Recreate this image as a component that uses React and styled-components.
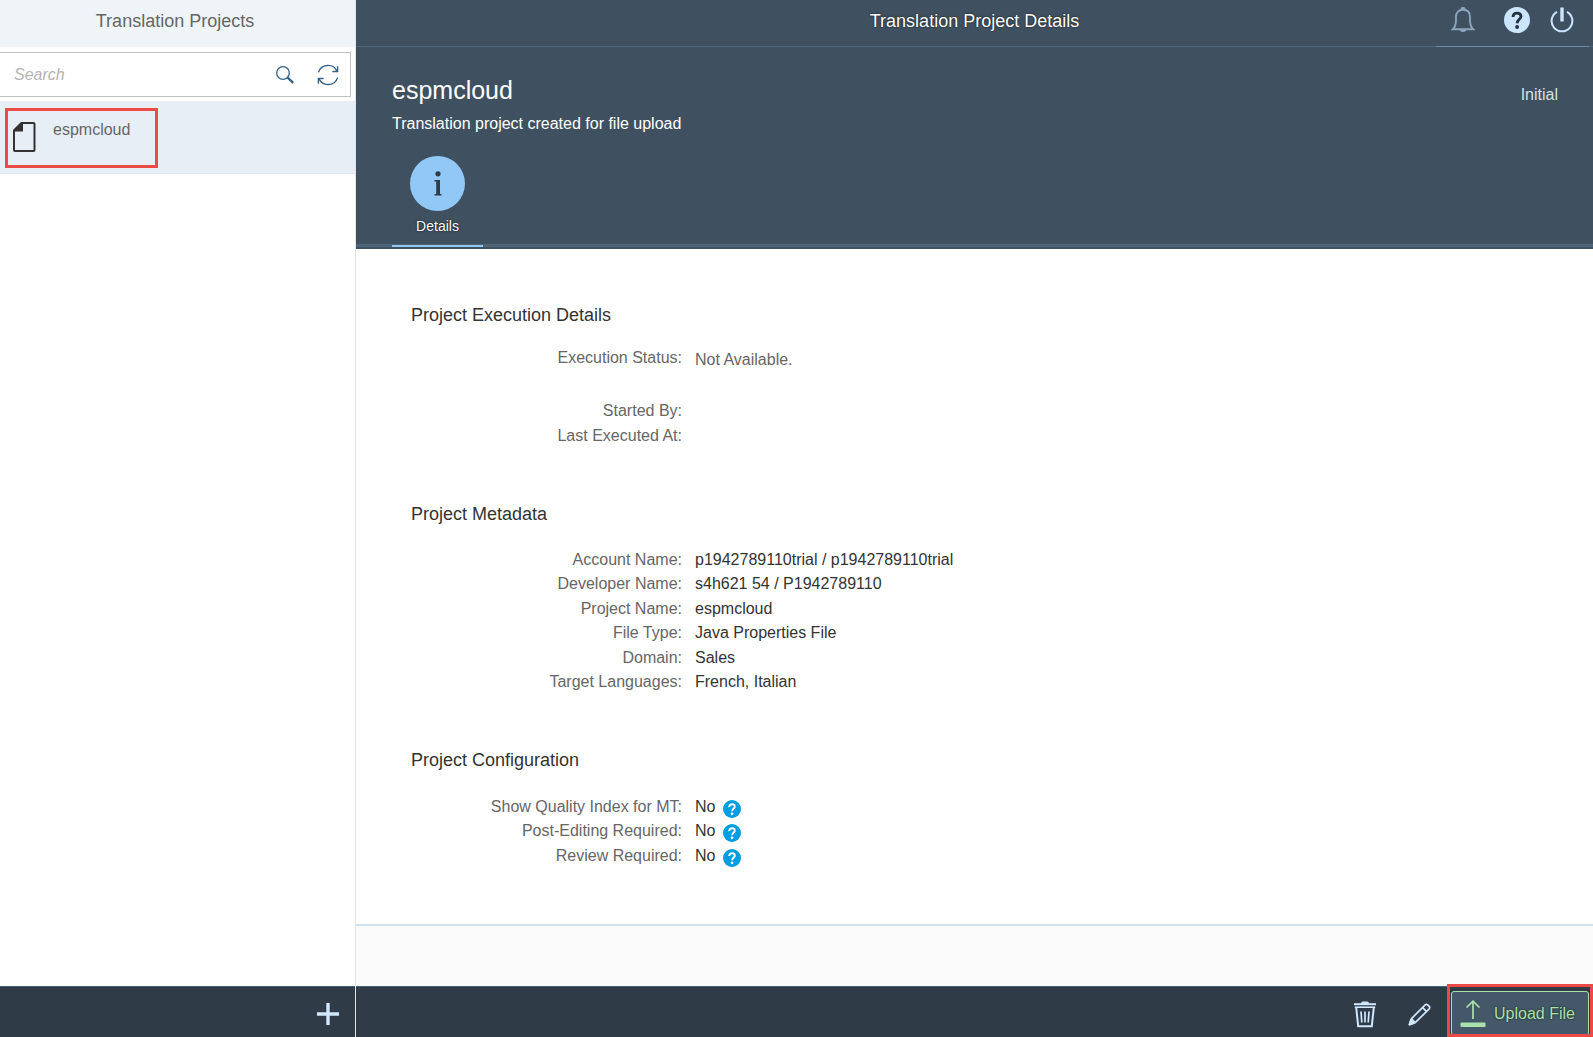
import React from "react";
import styled, { createGlobalStyle } from "styled-components";

const Global = createGlobalStyle`
  *, *::before, *::after { box-sizing: border-box; }
  body {
    margin: 0;
    font: 16px/24px "Liberation Sans", Arial, sans-serif;
    color: #333;
    background: #fff;
  }
  h1, h2, p, dl, dt, dd, ul { margin: 0; padding: 0; font-weight: 400; }
  button { font: inherit; color: inherit; background: none; border: 0; padding: 0; cursor: pointer; }
`;

const Page = styled.div`
  display: flex;
  min-height: 100vh;
`;

const Sidebar = styled.aside`
  display: flex;
  flex-direction: column;
  flex: none;
  width: 356px;
  border-right: 1px solid #e5e5e5;
`;

const Bar = styled.header`
  display: flex;
  height: 47px;
`;

const SidebarBar = styled(Bar)`
  align-items: center;
  justify-content: center;
  padding: 0 5px 6px 0;
  background: #eff4f8;
  color: #666;
`;

const BarTitle = styled.h1`
  font-size: 18px;
  line-height: 24px;
`;

const SearchBox = styled.form`
  display: flex;
  height: 45px;
  margin: 5px 4px 4px 0;
  padding-right: 1px;
  border: 1px solid #bfbfbf;
  border-left: 0;
  color: #346187;
`;

const SearchInput = styled.input`
  flex: 1;
  min-width: 0;
  padding: 0 0 0 14px;
  border: 0;
  outline: 0;
  background: transparent;
  font: inherit;
  color: #333;
  &::placeholder { color: #b3b3b3; font-style: italic; opacity: 1; }
`;

const IconButton = styled.button`
  display: flex;
  align-items: center;
  justify-content: center;
  flex: none;
  width: ${(p) => p.$width || 54}px;
`;

const ProjectList = styled.ul`
  flex: 1;
  list-style: none;
`;

const ProjectItem = styled.li`
  position: relative;
  display: flex;
  align-items: center;
  gap: 17px;
  height: 73px;
  padding-left: 13px;
  background: #e7eef6;
  border-bottom: 1px solid #e0e4e8;
`;

const ProjectLink = styled.a`
  align-self: flex-start;
  padding-top: 17px;
  color: #666;
  text-decoration: none;
`;

const Highlight = styled.span`
  position: absolute;
  inset: ${(p) => p.$inset};
  width: ${(p) => p.$width || "auto"};
  border: 3px solid #ec4a44;
  pointer-events: none;
`;

const Footer = styled.footer`
  display: flex;
  justify-content: flex-end;
  height: 51px;
  padding-top: 4px;
  border-top: 1px solid #456073;
  background: #2f3c48;
  color: #d1e8ff;
`;

const Main = styled.main`
  display: flex;
  flex-direction: column;
  flex: 1;
  min-width: 0;
`;

const DetailBar = styled(Bar)`
  display: grid;
  grid-template-columns: 1fr auto 1fr;
  border-bottom: 1px solid #4c6579;
  background: #3f5161;
  color: #fff;
  text-shadow: 0 0 2px #111;
`;

const DetailTitle = styled(BarTitle)`
  grid-column: 2;
  align-self: center;
  padding-bottom: 5px;
`;

const ShellActions = styled.nav`
  display: flex;
  justify-self: end;
  margin: 0 4px -1px 0;
  padding: 0 9px 6px 0;
  border-bottom: 1px solid #6d8ba4;
  color: #cbe5ff;
`;

const ObjectHeader = styled.section`
  padding-bottom: 2px;
  background: #3f5161;
  color: #fff;
`;

const ObjectSummary = styled.div`
  display: flex;
  justify-content: space-between;
  padding: 27px 35px 20px 36px;
`;

const ObjectTitle = styled.h2`
  margin-bottom: 6px;
  font-size: 25px;
  line-height: 32px;
`;

const ObjectStatus = styled.p`
  padding-top: 9px;
  color: #dcdfe2;
`;

const TabStrip = styled.div`
  display: flex;
  padding-left: 36px;
  border-bottom: 3px solid #4d6478;
`;

const Tab = styled.button`
  display: flex;
  flex-direction: column;
  align-items: center;
  gap: 5px;
  width: 91px;
  margin-bottom: -3px;
  padding-bottom: 9px;
  border-bottom: 2px solid #91c8f6;
  font-size: 14px;
  line-height: 20px;
  text-shadow: 0 0 2px #000;
`;

const TabCircle = styled.span`
  display: flex;
  align-items: center;
  justify-content: center;
  width: 55px;
  height: 55px;
  border-radius: 50%;
  background: #91c8f6;
`;

const Content = styled.div`
  display: flex;
  flex-direction: column;
  flex: 1;
  gap: 54px;
  padding: 54px 55px 48px;
  border-bottom: 2px solid #d1e0ee;
`;

const SectionTitle = styled.h2`
  margin-bottom: ${(p) => p.$gap}px;
  font-size: 18px;
  line-height: 24px;
`;

const Row = styled.div`
  display: grid;
  grid-template-columns: 271px 1fr;
  column-gap: 13px;
  min-height: ${(p) => (p.$tall ? 53 : 24)}px;
  &:nth-child(even):not(:last-child) { padding-bottom: 1px; }
`;

const Label = styled.dt`
  color: #666;
  text-align: right;
`;

const Value = styled.dd`
  display: flex;
  align-items: flex-end;
  gap: 8px;
`;

const StatusValue = styled.dd`
  color: #666;
  line-height: 28px;
`;

const HelpButton = styled.button`
  display: flex;
  padding-bottom: 1px;
  color: #009de0;
`;

const Spacer = styled.div`
  height: 60px;
  background: #fafafa;
`;

const UploadButton = styled.button`
  position: relative;
  display: flex;
  align-items: center;
  gap: 8px;
  height: 45px;
  margin: 0 4px 0 5px;
  padding: 0 13px 0 8px;
  border: 1px solid #abe2ab;
  border-radius: 3px;
  background: #445869;
  color: #abe2ab;
  text-shadow: 0 0 2px #111;
`;

function HelpIcon({ size, mark }) {
  return (
    <svg width={size} height={size} viewBox="0 0 26 26" aria-hidden="true">
      <circle cx="13" cy="13" r="13" fill="currentColor" />
      <path d="M9 10C9 7.4 10.6 6.2 13 6.2S17 7.5 17 9.6C17 12.3 13.2 12.4 13.2 16.2" fill="none" stroke={mark} strokeWidth="2.8" />
      <circle cx="13.1" cy="20" r="1.9" fill={mark} />
    </svg>
  );
}

const SearchIcon = () => (
  <svg width="18" height="18" viewBox="0 0 18 18" fill="none" stroke="currentColor" aria-hidden="true">
    <circle cx="7" cy="7" r="6.3" strokeWidth="1.3" />
    <path d="M11.5 11.5l5.6 5.3" strokeWidth="2.4" />
  </svg>
);

const RefreshIcon = () => (
  <svg width="22" height="22" viewBox="0 0 22 22" fill="none" stroke="currentColor" strokeWidth="1.4" aria-hidden="true">
    <path d="M1.4 8.4A10 10 0 0 1 20 7.2M20.6 13.6A10 10 0 0 1 2 14.8" />
    <path d="M20.6 2.2V7.5H15.4M1.4 19.8V14.5H6.6" />
  </svg>
);

const DocumentIcon = () => (
  <svg width="23" height="30" viewBox="0 0 23 30" aria-hidden="true">
    <path d="M9 1H20.5Q21.5 1 21.5 2V28Q21.5 29 20.5 29H2Q1 29 1 28V9Z" fill="none" stroke="#333" strokeWidth="2" />
    <path d="M10 0V9.5H0V8L8 0Z" fill="#333" />
  </svg>
);

const PlusIcon = () => (
  <svg width="22" height="22" viewBox="0 0 22 22" aria-hidden="true">
    <path d="M11 0V22M0 11H22" stroke="currentColor" strokeWidth="3.4" />
  </svg>
);

const BellIcon = () => (
  <svg width="24" height="26" viewBox="0 0 24 26" fill="none" stroke="#8ca4bb" strokeWidth="1.9" aria-hidden="true">
    <path d="M1.8 22.2C4.4 20 5 18 5 13V10C5 5.4 7.6 2.8 12 2.8S19 5.4 19 10V13C19 18 19.6 20 22.2 22.2Z" />
    <path d="M10.5 2.2A1.5 1.5 0 0 1 13.5 2.2ZM9.8 23.2A2.4 1.6 0 0 0 14.2 23.2Z" fill="#8ca4bb" />
  </svg>
);

const PowerIcon = () => (
  <svg width="24" height="26" viewBox="0 0 24 26" fill="none" stroke="currentColor" aria-hidden="true">
    <path d="M7 4.8A10.4 10.4 0 1 0 17 4.8" strokeWidth="2" />
    <path d="M12 0.5V14.5" strokeWidth="3.4" />
  </svg>
);

const InfoIcon = () => (
  <svg width="8" height="25" viewBox="0 0 8 25" fill="#2f3c48" aria-hidden="true">
    <circle cx="4" cy="2.8" r="2.6" />
    <path d="M0.5 9H6V23H7.5V24.5H0.5V23H2.2V10.5H0.5Z" />
  </svg>
);

const TrashIcon = () => (
  <svg width="24" height="27" viewBox="0 0 24 27" fill="none" stroke="currentColor" aria-hidden="true">
    <path d="M1 3.2H23" strokeWidth="2" />
    <path d="M1.8 6.2H22.2" strokeWidth="1.6" />
    <path d="M8.5 2.2Q8.5 1 10 1H14Q15.5 1 15.5 2.2V3H8.5Z" fill="currentColor" strokeWidth="1" />
    <path d="M3.2 6.5L5.2 25.2H18.8L20.8 6.5" strokeWidth="2" />
    <path d="M8 10.5L8.8 21.5M12 10.5V21.5M16 10.5L15.2 21.5" strokeWidth="1.7" />
  </svg>
);

const PencilIcon = () => (
  <svg width="23" height="23" viewBox="0 0 23 23" fill="none" stroke="currentColor" strokeWidth="1.7" strokeLinejoin="round" aria-hidden="true">
    <path d="M1.4 21.6L3.3 15.8L17.2 1.8Q18.4 0.8 19.6 1.8L21.2 3.4Q22.2 4.6 21.2 5.8L7.2 19.7Z" />
    <path d="M14.6 4.6L18.4 8.4M3.6 16L7 19.4" />
    <path d="M1.4 21.6L2.8 17.4L5.6 20.2Z" fill="currentColor" />
  </svg>
);

const UploadIcon = () => (
  <svg width="26" height="27" viewBox="0 0 26 27" fill="none" stroke="currentColor" aria-hidden="true">
    <path d="M13 19V1.5M6.5 7.5L13 1.2L19.5 7.5" strokeWidth="1.7" />
    <rect x="0.5" y="22.5" width="25" height="4.5" rx="1" fill="currentColor" stroke="none" />
  </svg>
);

const METADATA = [
  ["Account Name:", "p1942789110trial / p1942789110trial"],
  ["Developer Name:", "s4h621 54 / P1942789110"],
  ["Project Name:", "espmcloud"],
  ["File Type:", "Java Properties File"],
  ["Domain:", "Sales"],
  ["Target Languages:", "French, Italian"],
];

const CONFIGURATION = [
  ["Show Quality Index for MT:", "No"],
  ["Post-Editing Required:", "No"],
  ["Review Required:", "No"],
];

export default function App() {
  return (
    <>
      <Global />
      <Page>
        <Sidebar>
          <SidebarBar>
            <BarTitle>Translation Projects</BarTitle>
          </SidebarBar>
          <SearchBox role="search" onSubmit={(e) => e.preventDefault()}>
            <SearchInput type="text" placeholder="Search" aria-label="Search" />
            <IconButton $width={43} aria-label="Search"><SearchIcon /></IconButton>
            <IconButton $width={43} type="button" aria-label="Refresh"><RefreshIcon /></IconButton>
          </SearchBox>
          <ProjectList>
            <ProjectItem>
              <DocumentIcon />
              <ProjectLink href="#espmcloud">espmcloud</ProjectLink>
              <Highlight $inset="7px auto 5px 5px" $width="153px" />
            </ProjectItem>
          </ProjectList>
          <Footer>
            <IconButton aria-label="Add project"><PlusIcon /></IconButton>
          </Footer>
        </Sidebar>

        <Main>
          <DetailBar>
            <DetailTitle>Translation Project Details</DetailTitle>
            <ShellActions>
              <IconButton aria-label="Notifications"><BellIcon /></IconButton>
              <IconButton aria-label="Help"><HelpIcon size={26} mark="#25303a" /></IconButton>
              <IconButton $width={36} aria-label="Log out"><PowerIcon /></IconButton>
            </ShellActions>
          </DetailBar>

          <ObjectHeader>
            <ObjectSummary>
              <div>
                <ObjectTitle>espmcloud</ObjectTitle>
                <p>Translation project created for file upload</p>
              </div>
              <ObjectStatus>Initial</ObjectStatus>
            </ObjectSummary>
            <TabStrip role="tablist">
              <Tab role="tab" aria-selected="true">
                <TabCircle><InfoIcon /></TabCircle>
                Details
              </Tab>
            </TabStrip>
          </ObjectHeader>

          <Content>
            <section>
              <SectionTitle $gap={19}>Project Execution Details</SectionTitle>
              <dl>
                <Row $tall>
                  <Label>Execution Status:</Label>
                  <StatusValue>Not Available.</StatusValue>
                </Row>
                <Row><Label>Started By:</Label><Value /></Row>
                <Row><Label>Last Executed At:</Label><Value /></Row>
              </dl>
            </section>
            <section>
              <SectionTitle $gap={22}>Project Metadata</SectionTitle>
              <dl>
                {METADATA.map(([label, value]) => (
                  <Row key={label}>
                    <Label>{label}</Label>
                    <Value>{value}</Value>
                  </Row>
                ))}
              </dl>
            </section>
            <section>
              <SectionTitle $gap={23}>Project Configuration</SectionTitle>
              <dl>
                {CONFIGURATION.map(([label, value]) => (
                  <Row key={label}>
                    <Label>{label}</Label>
                    <Value>
                      {value}
                      <HelpButton aria-label={`Help: ${label}`}><HelpIcon size={18} mark="#fff" /></HelpButton>
                    </Value>
                  </Row>
                ))}
              </dl>
            </section>
          </Content>
          <Spacer />

          <Footer>
            <IconButton aria-label="Delete"><TrashIcon /></IconButton>
            <IconButton aria-label="Edit"><PencilIcon /></IconButton>
            <UploadButton>
              <UploadIcon />
              Upload File
              <Highlight $inset="-8px -5px -2px -5px" />
            </UploadButton>
          </Footer>
        </Main>
      </Page>
    </>
  );
}
